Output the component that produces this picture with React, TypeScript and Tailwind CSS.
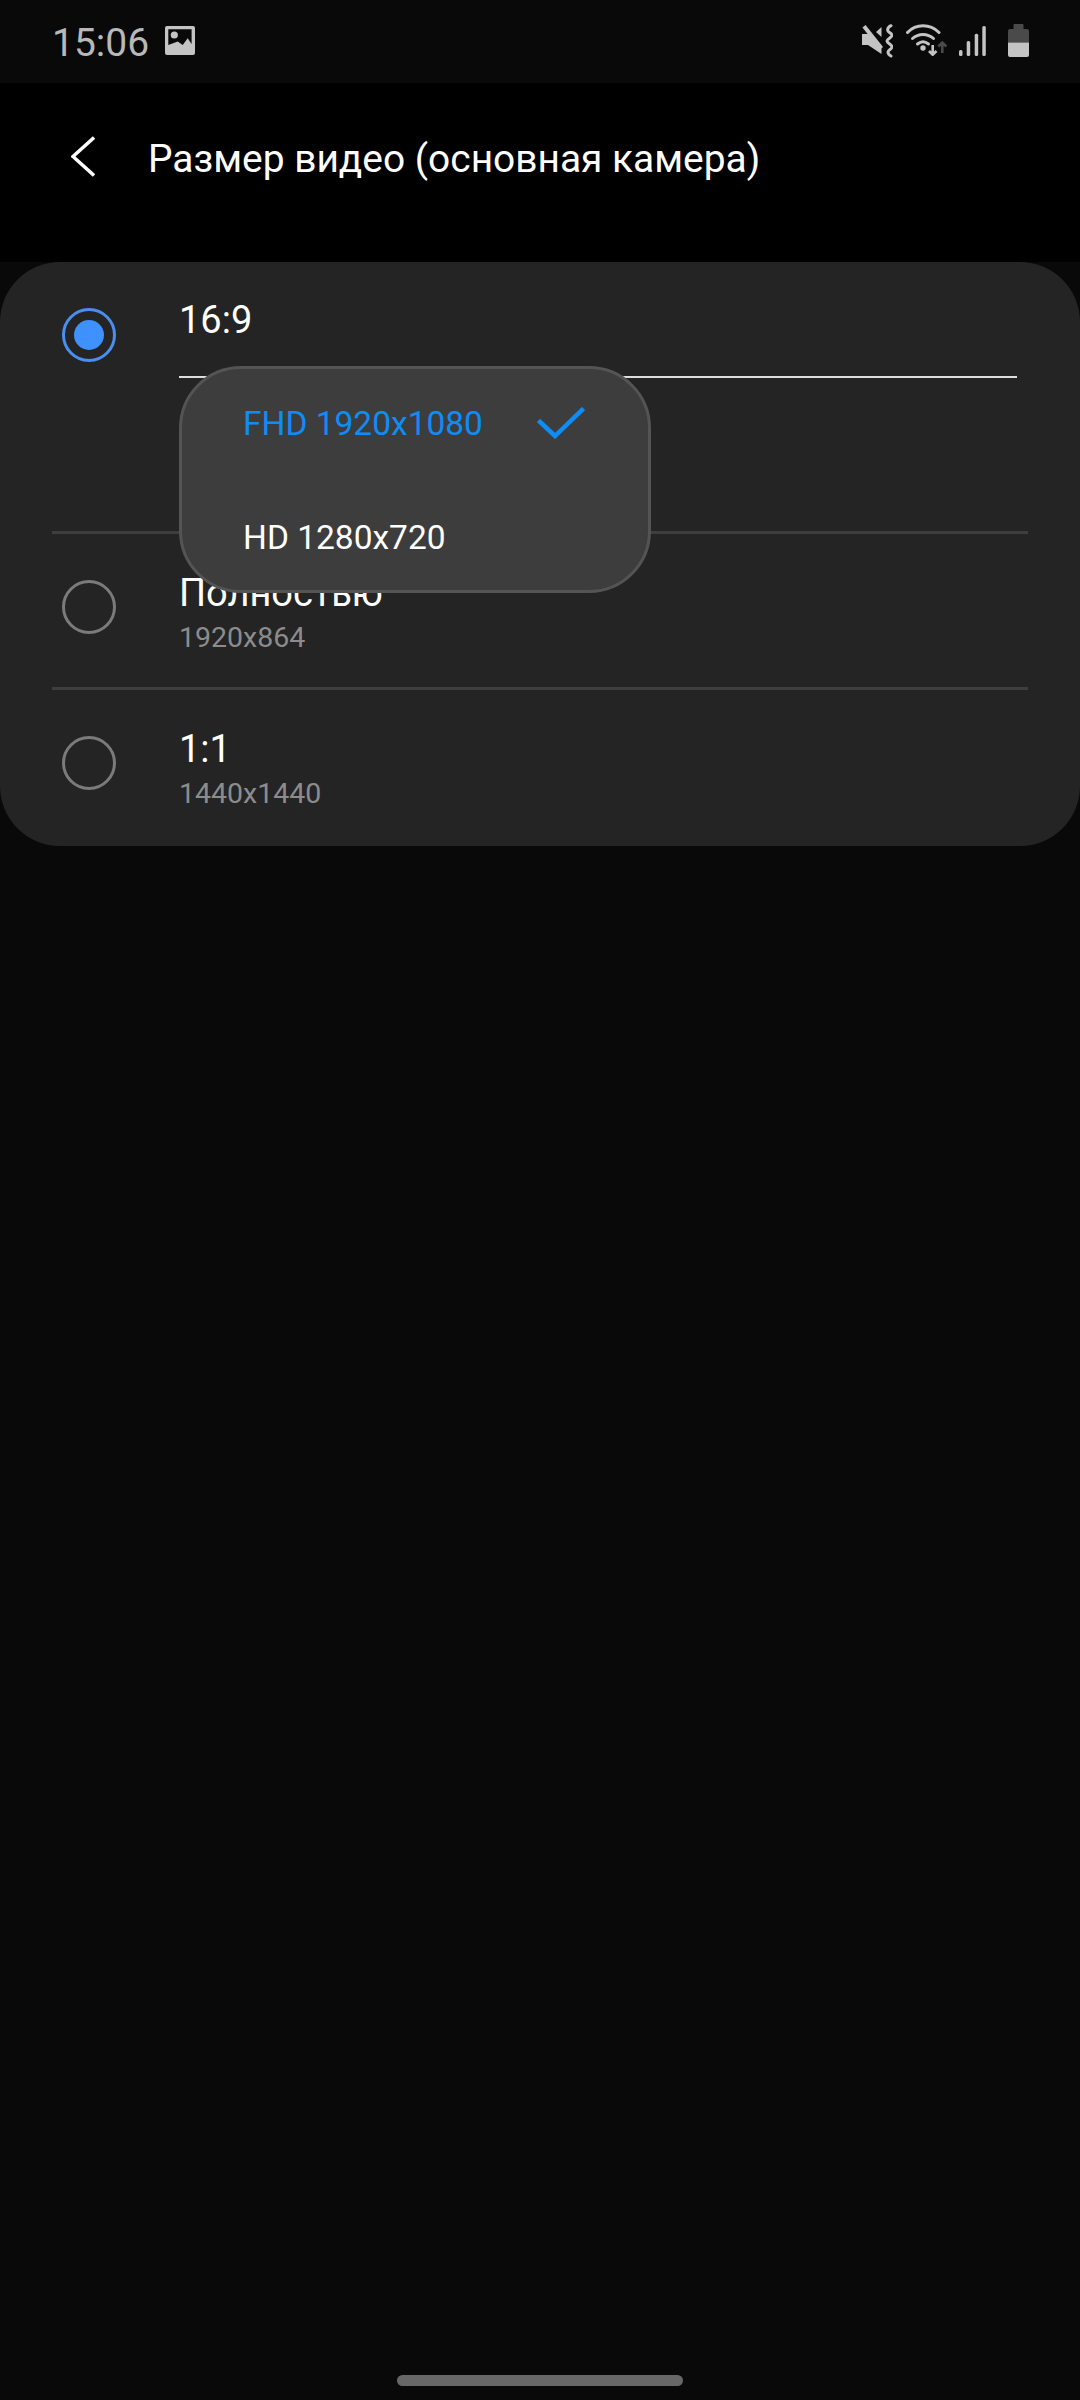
const roboto = "font-['Roboto',sans-serif]";

const options = [
  { label: "Полностью", sub: "1920x864" },
  { label: "1:1", sub: "1440x1440" },
];

function ImageIcon() {
  return (
    <svg width="30" height="29" viewBox="0 0 30 29" className="ml-[16px] mt-[2px]">
      <path fill="#c4c4c4" fillRule="evenodd" d="M2 0h26a2 2 0 0 1 2 2v25a2 2 0 0 1-2 2H2a2 2 0 0 1-2-2V2a2 2 0 0 1 2-2zM3.3 3.3V19l9.4-3.5 5 3.5 5-6.7 3.9 5.7V3.3z" />
      <circle cx="9.3" cy="9" r="3.6" fill="#c4c4c4" />
    </svg>
  );
}

function MuteIcon() {
  return (
    <svg width="31" height="34" viewBox="0 0 31 34">
      <path fill="#c4c4c4" d="M0 10h6l13.5 14v6L6 21H0zM14 8l5.5-5v10z" />
      <path stroke="#c4c4c4" strokeWidth="4" d="M2 2.3l17.5 22" />
      <path fill="none" stroke="#c4c4c4" strokeWidth="3" strokeLinecap="round" d="M29 1.7c-3 1.5-3.5 3-3.3 4.6.2 2 4.3 3 4.3 5 0 2.2-5 3.5-5 5.7 0 2.2 5 3.5 5 6 0 2-4 3-4 5 0 1.5 1 3 3 4" />
    </svg>
  );
}

function WifiIcon() {
  return (
    <svg width="42" height="32" viewBox="0 0 42 32" className="ml-[13px]">
      <g fill="none" stroke="#c4c4c4" strokeWidth="3" strokeLinecap="round">
        <path d="M1.5 8.5C10 -0.5 24 -0.5 33 8.5" />
        <path d="M6.5 14.5c6-5.5 15-5.5 21 0" />
        <path d="M11.5 20c3.5-2.8 7.5-2.8 11 0" />
      </g>
      <circle cx="17" cy="24" r="2.7" fill="#c4c4c4" />
      <path stroke="#c4c4c4" strokeWidth="2.6" fill="none" d="M26.7 21v9M23 27l3.7 3.7L30.5 27" />
      <path stroke="#4a4a4a" strokeWidth="2.6" fill="none" d="M36.3 29V19M32.3 22.5l4-4 4 4" />
    </svg>
  );
}

function SignalIcon() {
  return (
    <svg width="27" height="30" viewBox="0 0 27 30" className="ml-[11px] mt-[2px]">
      <g fill="#c4c4c4">
        <rect x="0" y="24" width="3.5" height="6" rx="1.5" />
        <rect x="7.7" y="15" width="3.5" height="15" rx="1.5" />
        <rect x="15.7" y="7.7" width="3.5" height="22.3" rx="1.5" />
        <rect x="23.3" y="0" width="3.5" height="30" rx="1.5" />
      </g>
    </svg>
  );
}

function BatteryIcon() {
  return (
    <svg width="21" height="33" viewBox="0 0 21 33" className="ml-[22px]">
      <path fill="#4a4a4a" d="M6.5 0h8a1 1 0 0 1 1 1v4H19a2 2 0 0 1 2 2v11.5H0V7a2 2 0 0 1 2-2h3.5V1a1 1 0 0 1 1-1z" />
      <path fill="#c4c4c4" d="M0 18.5h21V31a2 2 0 0 1-2 2H2a2 2 0 0 1-2-2z" />
    </svg>
  );
}

function Radio({ checked }: { checked?: boolean }) {
  return (
    <div
      className={`flex h-[54px] w-[54px] shrink-0 items-center justify-center rounded-full border-[3px] ${
        checked ? "border-[#4a8ff0]" : "border-[#7b7b7b]"
      }`}
    >
      {checked && <div className="h-[30px] w-[30px] rounded-full bg-[#3e91ff]" />}
    </div>
  );
}

export default function App() {
  return (
    <div className={`flex h-[2400px] w-[1080px] flex-col overflow-hidden bg-[#090909] ${roboto}`}>
      {/* status bar */}
      <div className="flex h-[83px] items-start justify-between pl-[52px] pr-[51px] pt-[24px]">
        <div className="flex items-start">
          <span className="-mt-[3px] text-[39px] leading-[44px] text-[#b8b8b8]">15:06</span>
          <ImageIcon />
        </div>
        <div className="flex items-start">
          <MuteIcon />
          <WifiIcon />
          <SignalIcon />
          <BatteryIcon />
        </div>
      </div>

      {/* header */}
      <div className="flex h-[179px] items-start bg-black pt-[53px]">
        <svg width="24" height="41" viewBox="0 0 24 41" className="ml-[71px]">
          <path d="M23 1.5L2 20.5l21 19" fill="none" stroke="#fff" strokeWidth="3.5" />
        </svg>
        <h1 className="ml-[53px] text-[38.9px] leading-[46px] font-normal text-white">
          Размер видео (основная камера)
        </h1>
      </div>

      {/* card */}
      <div className="relative h-[584px] rounded-[60px] bg-[#242424]">
        <div className="flex h-[269px] items-start pl-[62px] pt-[46px]">
          <Radio checked />
          <div className="ml-[63px] w-[838px] -mt-[10px]">
            <div className="text-[38px] leading-[44px] text-white">16:9</div>
            <div className="mt-[34px] h-[2px] bg-[#dedede]" />
          </div>
        </div>

        {options.map((opt) => (
          <div key={opt.label}>
            <div className="mx-[52px] h-[3px] bg-[#3e3e3e]" />
            <div className="flex h-[153px] items-start pl-[62px] pt-[46px]">
              <Radio />
              <div className="ml-[63px] -mt-[9px]">
                <div className="text-[38px] leading-[44px] text-white">{opt.label}</div>
                <div className="mt-[5px] text-[28.5px] leading-[36px] text-[#8c8c8c]">{opt.sub}</div>
              </div>
            </div>
          </div>
        ))}

        {/* dropdown */}
        <div className="absolute left-[179px] top-[104px] flex h-[227px] w-[472px] flex-col gap-1 rounded-[62px] border-[3px] border-[#545454] bg-[#3d3d3d] pl-[61px] pr-[63px] text-[33.5px]">
          <div className="flex h-[110px] shrink-0 items-center justify-between text-[#0f8cf5]">
            <span>FHD 1920x1080</span>
            <svg width="48" height="32" viewBox="0 0 48 32" className="mb-[2px]">
              <path d="M1.5 13.5L18 29 46.5 1.5" fill="none" stroke="#0f8cf5" strokeWidth="4.5" />
            </svg>
          </div>
          <div className="flex h-[110px] shrink-0 items-center text-white">HD 1280x720</div>
        </div>
      </div>

      {/* home indicator */}
      <div className="flex flex-1 items-end justify-center pb-[14px]">
        <div className="h-[11px] w-[286px] rounded-full bg-[#676767]" />
      </div>
    </div>
  );
}
